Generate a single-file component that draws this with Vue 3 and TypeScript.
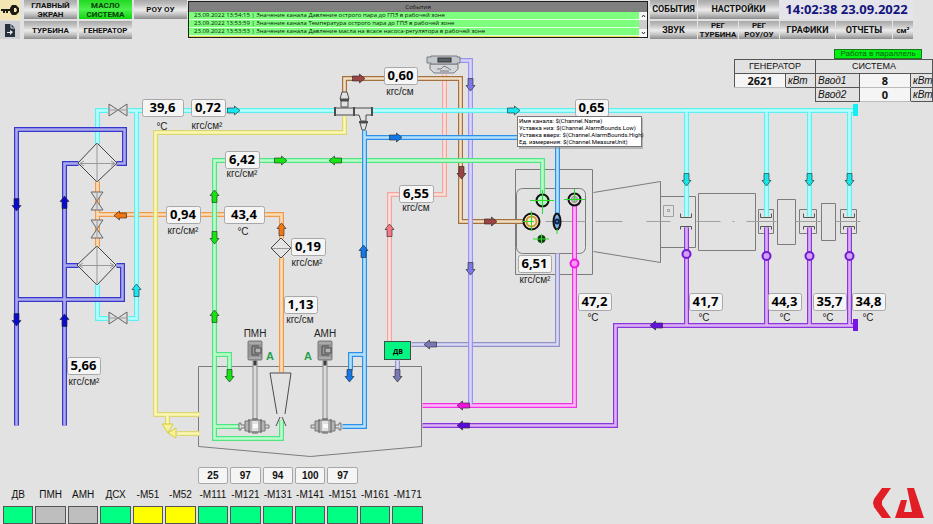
<script setup lang="ts">
import { ref } from 'vue'

type Dir = 'r' | 'd' | 'l' | 'u'

interface PipeGroup {
  id: string
  edge: string
  core: string
  d: string
}

interface Arrow {
  x: number
  y: number
  dir: Dir
  fill: string
}

interface Readout {
  x: number
  y: number
  w: number
  value: string
  unit?: string
  ux?: number
  uy?: number
}

interface Lamp {
  name: string
  state: 'on' | 'off' | 'warn'
  load?: number
}

const clock = ref('14:02:38 23.09.2022')

const events = [
  '23.09.2022 13:54:15 | Значение канала Давление острого пара до ГПЗ в рабочей зоне',
  '23.09.2022 13:53:59 | Значение канала Температура острого пара до ГПЗ в рабочей зоне',
  '23.09.2022 13:53:53 | Значение канала Давление масла на всасе насоса-регулятора в рабочей зоне',
]

const pipes: PipeGroup[] = [
  { id: 'drain', edge: '#9191c8', core: '#d9d9f4', d: 'M557 253V344H411M397 360V372' },
  { id: 'orange', edge: '#f09a46', core: '#fadcba', d: 'M97 181V246M97 214H281V238M281 257V372' },
  { id: 'pink', edge: '#f5a59c', core: '#fbe0dc', d: 'M444 74V194H389V341' },
  { id: 'brown', edge: '#a3703f', core: '#f3dfc6', d: 'M344 92V78H460V221H531' },
  { id: 'magenta', edge: '#f032e6', core: '#ffb9fa', d: 'M574 200V405H422' },
  { id: 'violet', edge: '#9a93f3', core: '#d8d5fb', d: 'M458 60H470V404' },
  { id: 'yellow', edge: '#dcd672', core: '#fbf8b4', d: 'M344 116V132H155V414H199M167 414V424M177 433H199' },
  {
    id: 'cyan',
    edge: '#5df0f0',
    core: '#b8ffff',
    d: 'M97 144V110H108M128 110H854M136 110V318H128M108 318H97V284M686 110V216M766 110V216M809 110V216M849 110V216',
  },
  {
    id: 'green',
    edge: '#4fe583',
    core: '#bdfccb',
    d: 'M542 200V160H214V438H281V420M214 426H240M214 354H229V370',
  },
  { id: 'blue', edge: '#2e8fe8', core: '#b4e2fb', d: 'M364 130V426H342M364 137H557V214M364 354H350V370' },
  { id: 'navy', edge: '#3737cd', core: '#aaaaeb', d: 'M16 425V129H124V163H116M64 425V163H78M64 265H78M116 265H122V299H16' },
  {
    id: 'purple',
    edge: '#8b36dc',
    core: '#dcb4f5',
    d: 'M854 325H615V425H422M686 227V325M766 227V325M809 227V325M849 227V325',
  },
]

const turn: Record<Dir, number> = { r: 0, d: 90, l: 180, u: 270 }

const arrows: Arrow[] = [
  { x: 233, y: 110, dir: 'r', fill: '#19e6f0' },
  { x: 513, y: 110, dir: 'r', fill: '#19e6f0' },
  { x: 686, y: 179, dir: 'd', fill: '#19e6e6' },
  { x: 766, y: 179, dir: 'd', fill: '#19e6e6' },
  { x: 809, y: 179, dir: 'd', fill: '#19e6e6' },
  { x: 849, y: 179, dir: 'd', fill: '#19e6e6' },
  { x: 136, y: 290, dir: 'u', fill: '#19e6f0' },
  { x: 16, y: 204, dir: 'd', fill: '#0a0ad0' },
  { x: 64, y: 202, dir: 'u', fill: '#0a0ad0' },
  { x: 16, y: 319, dir: 'd', fill: '#0a0ad0' },
  { x: 64, y: 320, dir: 'u', fill: '#0a0ad0' },
  { x: 120, y: 215, dir: 'l', fill: '#f07814' },
  { x: 281, y: 229, dir: 'u', fill: '#f07814' },
  { x: 214, y: 196, dir: 'u', fill: '#14e614' },
  { x: 214, y: 237, dir: 'd', fill: '#14e614' },
  { x: 214, y: 316, dir: 'u', fill: '#14e614' },
  { x: 229, y: 375, dir: 'd', fill: '#14e614' },
  { x: 280, y: 160, dir: 'r', fill: '#14e614' },
  { x: 335, y: 160, dir: 'l', fill: '#14e614' },
  { x: 395, y: 137, dir: 'r', fill: '#1478e6' },
  { x: 363, y: 251, dir: 'u', fill: '#1478e6' },
  { x: 349, y: 375, dir: 'd', fill: '#1478e6' },
  { x: 358, y: 78, dir: 'r', fill: '#9c4444' },
  { x: 461, y: 172, dir: 'd', fill: '#9c4444' },
  { x: 490, y: 221, dir: 'r', fill: '#9c4444' },
  { x: 389, y: 230, dir: 'u', fill: '#f57882' },
  { x: 470, y: 84, dir: 'd', fill: '#7d78e6' },
  { x: 470, y: 268, dir: 'd', fill: '#7d78e6' },
  { x: 463, y: 405, dir: 'l', fill: '#f014dc' },
  { x: 463, y: 425, dir: 'l', fill: '#5a0adc' },
  { x: 656, y: 325, dir: 'l', fill: '#6414dc' },
  { x: 430, y: 344, dir: 'l', fill: '#7878b4' },
  { x: 397, y: 375, dir: 'd', fill: '#7878b4' },
]

const P2 = 'кгс/см²'
const P1 = 'кгс/см'
const T = '°C'

const readouts: Readout[] = [
  { x: 142, y: 99, w: 41, value: '39,6', unit: T, ux: 162, uy: 130 },
  { x: 191, y: 99, w: 34, value: '0,72', unit: P2, ux: 207, uy: 129 },
  { x: 225, y: 151, w: 34, value: '6,42', unit: P2, ux: 242, uy: 177 },
  { x: 224, y: 206, w: 40, value: '43,4', unit: T, ux: 243, uy: 235 },
  { x: 166, y: 206, w: 34, value: '0,94', unit: P2, ux: 183, uy: 234 },
  { x: 291, y: 238, w: 34, value: '0,19', unit: P2, ux: 307, uy: 266 },
  { x: 284, y: 296, w: 33, value: '1,13', unit: P1, ux: 300, uy: 323 },
  { x: 67, y: 357, w: 33, value: '5,66', unit: P2, ux: 84, uy: 385 },
  { x: 384, y: 67, w: 33, value: '0,60', unit: P1, ux: 400, uy: 95 },
  { x: 399, y: 185, w: 34, value: '6,55', unit: P1, ux: 416, uy: 211 },
  { x: 575, y: 99, w: 33, value: '0,65' },
  { x: 518, y: 255, w: 33, value: '6,51', unit: P2, ux: 535, uy: 283 },
  { x: 578, y: 293, w: 33, value: '47,2', unit: T, ux: 593, uy: 321 },
  { x: 689, y: 293, w: 33, value: '41,7', unit: T, ux: 704, uy: 321 },
  { x: 768, y: 293, w: 33, value: '44,3', unit: T, ux: 785, uy: 321 },
  { x: 813, y: 293, w: 33, value: '35,7', unit: T, ux: 828, uy: 321 },
  { x: 852, y: 293, w: 33, value: '34,8', unit: T, ux: 868, uy: 321 },
]

const valves = [
  { x: 118, y: 110, a: 0 },
  { x: 118, y: 318, a: 0 },
  { x: 97, y: 201, a: 90 },
  { x: 97, y: 229, a: 90 },
]

const bearings = [686, 766, 809, 849]

const pumps = [
  { name: 'ПМН', x: 255, mode: 270, out: -1 },
  { name: 'АМН', x: 325, mode: 308, out: 1 },
]

const hint = [
  'Имя канала: $(Channel.Name)',
  'Уставка низ:  $(Channel.AlarmBounds.Low)',
  'Уставка вверх:  $(Channel.AlarmBounds.High)',
  'Ед. измерения:  $(Channel.MeasureUnit)',
]

const lamps: Lamp[] = [
  { name: 'ДВ', state: 'on' },
  { name: 'ПМН', state: 'off' },
  { name: 'АМН', state: 'off' },
  { name: 'ДСХ', state: 'on' },
  { name: '-М51', state: 'warn' },
  { name: '-М52', state: 'warn' },
  { name: '-М111', state: 'on', load: 25 },
  { name: '-М121', state: 'on', load: 97 },
  { name: '-М131', state: 'on', load: 94 },
  { name: '-М141', state: 'on', load: 100 },
  { name: '-М151', state: 'on', load: 97 },
  { name: '-М161', state: 'on' },
  { name: '-М171', state: 'on' },
]
</script>

<template>
  <div class="screen">
    <header class="bar">
      <div class="tools">
        <button class="tool key" type="button" aria-label="Доступ">
          <svg width="18" height="10" viewBox="0 0 18 10">
            <path d="M11 0H15L18 3V7L15 10H11L9 7V6H7V8H5V6H4V8H2V6H0V4H9V3ZM13 3V7H15L16 5L15 3Z" fill="#1c1a14" fill-rule="evenodd" />
          </svg>
        </button>
        <button class="tool" type="button" aria-label="Документ">
          <svg width="12" height="15" viewBox="0 0 12 15">
            <path d="M1 1H7L11 5V14H1Z" fill="#28303e" />
            <path d="M7 1V5H11" fill="none" stroke="#d8dce4" />
            <path d="M3 9H6V7L9 9L6 12V10H3Z" fill="#e8ecf2" />
          </svg>
        </button>
      </div>

      <nav class="nav">
        <button class="btn" type="button">ГЛАВНЫЙ<br />ЭКРАН</button>
        <button class="btn active" type="button">МАСЛО<br />СИСТЕМА</button>
        <button class="btn" type="button">РОУ ОУ</button>
        <button class="btn" type="button">ТУРБИНА</button>
        <button class="btn" type="button">ГЕНЕРАТОР</button>
      </nav>

      <section class="events">
        <h2>События</h2>
        <div class="log">
          <ul>
            <li v-for="e in events" :key="e">{{ e }}</li>
            <li class="warn"></li>
          </ul>
          <div class="scroll">
            <button type="button" aria-label="Вверх">
              <svg width="5" height="4" viewBox="0 0 5 4"><path d="M1 3L2.5 1L4 3" fill="none" stroke="#333" /></svg>
            </button>
            <span class="thumb"></span>
            <button type="button" aria-label="Вниз">
              <svg width="5" height="4" viewBox="0 0 5 4"><path d="M1 1L2.5 3L4 1" fill="none" stroke="#333" /></svg>
            </button>
          </div>
        </div>
      </section>

      <div class="controls">
        <button class="btn" type="button">СОБЫТИЯ</button>
        <button class="btn c-setup" type="button">НАСТРОЙКИ</button>
        <time class="clock">{{ clock }}</time>
        <button class="btn" type="button">ЗВУК</button>
        <button class="btn tight" type="button">РЕГ<br />ТУРБИНА</button>
        <button class="btn tight" type="button">РЕГ<br />РОУ/ОУ</button>
        <button class="btn" type="button">ГРАФИКИ</button>
        <button class="btn" type="button">ОТЧЕТЫ</button>
        <button class="btn tight" type="button">см²</button>
      </div>
    </header>

    <main class="stage">
      <svg class="scheme" viewBox="0 40 933 425">
        <g class="machine" transform="translate(.5 .5)">
          <path d="M198 366H421V446L310 456L198 446Z" />
          <path d="M515 169H592V274H515ZM593 192L660 181V262L593 251M660 196H695V247H660M698 193H755V250H698ZM777 199H795V244H777ZM821 203H835V240H821Z" />
          <rect x="516" y="188" width="69" height="65" rx="6" />
          <path d="M758 209H773V233H758ZM799 209H816V233H799ZM840 209H856V233H840Z" />
          <path class="thin" d="M663 205H673V216H663ZM667 209H669V211H667Z" />
          <path class="thin" d="M545 221H585M595 221H622M646 221H670M696 221H720M732 221H734M746 221H776M795 221H821M835 221H860" />
        </g>

        <g v-for="p in pipes" :key="p.id" class="pipe" transform="translate(.5 .5)">
          <path :d="p.d" :stroke="p.edge" stroke-width="5" />
          <path :d="p.d" :stroke="p.core" stroke-width="2.6" />
        </g>

        <rect x="853" y="104" width="5" height="12" fill="#0ff0f5" />
        <rect x="853" y="319" width="5" height="12" fill="#7814e6" />

        <g v-for="x in bearings" :key="x" class="bracket" transform="translate(.5 .5)">
          <path :d="`M${x - 6} 213V217H${x + 5}V213M${x - 6} 229V226H${x + 5}V229`" />
        </g>
        <circle v-for="x in bearings" :key="'p' + x" :cx="x + 0.5" :cy="x === 686 ? 254 : 256" r="4" fill="#d2a0f5" stroke="#7319d7" stroke-width="2" />
        <circle cx="574.5" cy="263.5" r="4" fill="#f59bf0" stroke="#f014e6" stroke-width="2" />

        <!-- heat exchangers and filter -->
        <g class="cooler">
          <path d="M97 143L117 163L97 182L78 163Z" />
          <path d="M97 246L116 265L97 285L77 265Z" />
          <path d="M281 238L291 248L281 258L271 248Z" />
          <path class="axis" d="M97 143V182M80 163.500H115M84 161L80 163.500L84 166M111 161L115 163.500L111 166" />
          <path class="axis" d="M97 246V285M79 265.500H114M83 263L79 265.500L83 268M110 263L114 265.500L110 268" />
          <path class="axis" d="M272 248.500H290" />
        </g>

        <g v-for="v in valves" :key="v.x + '-' + v.y" :transform="`translate(${v.x} ${v.y}) rotate(${v.a})`">
          <path d="M-9 -6L9 6V-6L-9 6Z" fill="#dedede" stroke="#666" />
          <path d="M-8 0H8" stroke="#999" />
        </g>

        <!-- relief valve of the yellow line -->
        <g fill="#f6f19a" stroke="#d6cf3c">
          <path d="M162 424H173L168 433Z" />
          <path d="M168 433L176 428V438Z" />
        </g>

        <!-- ejector -->
        <g fill="#e2e2e2" stroke="#4c4c4c">
          <path d="M342 92H347L349 99H340ZM341 101H348V107H341Z" />
          <path d="M335 108H354V115H335ZM354 108H372V115H366V121H361L359 115H354Z" />
          <path d="M360 123H367L365 130H362Z" />
          <path d="M335 107V116M354 107V116M372 107V116M359 122H368M340 100H349" stroke-width="2" />
        </g>

        <!-- flow meter -->
        <g stroke="#777b82">
          <path d="M430 64H458V69L454 73H434L430 69Z" fill="#d4d6da" />
          <path d="M427 57H431V56H457V57H460V63H457V64H431V63H427Z" fill="#c3c6cb" />
          <path d="M437 69H441L444 66L448 68L451 70M440 71H449" fill="none" />
          <rect x="438" y="58" width="13" height="4" fill="#56616a" stroke="#333" />
        </g>

        <!-- funnel and nozzle -->
        <path d="M277 414L270 373H291L285 414M276 426L280 417M286 426L282 417" fill="none" stroke="#4c4c4c" />

        <g v-for="p in pumps" :key="p.name" :transform="`translate(${p.x} 0)`">
          <rect x="-2" y="361" width="4" height="58" fill="#dcdcdc" stroke="#8a8a8a" />
          <rect x="-1" y="361" width="2" height="4" fill="#333" stroke="#444" />
          <rect x="-7" y="341" width="14" height="19" rx="1" fill="#969696" stroke="#7d7d7d" />
          <path d="M-6 343H6M-6 358H6" stroke="#bebebe" />
          <path d="M4 346H-3V355H4" fill="none" stroke="#4b4b4b" />
          <rect x="0" y="348" width="6" height="5" fill="#b4b4b4" stroke="#4b4b4b" />
          <g stroke="#777">
            <path :d="p.out < 0 ? 'M-16 423H-14V425H-10V428H-14V430H-16ZM10 425H14V428H10' : 'M16 423H14V425H10V428H14V430H16ZM-10 425H-14V428H-10'" fill="#ddd" />
            <path d="M-10 421H-6V420H6V421H10V431H6V432H-6V431H-10Z" fill="#b4b4b4" />
            <path d="M-6 419V433M6 419V433M-3 419H3M-3 433H3" stroke="#5f5f5f" />
            <path d="M-3 421H3V431H-3Z" fill="#e1e1e1" stroke="none" />
            <path d="M-2 424H3V428H-2Z" fill="#fafafa" stroke="none" />
          </g>
          <text class="tag" x="0" y="337">{{ p.name }}</text>
          <text class="mode" :x="p.mode - p.x" y="360">A</text>
        </g>

        <!-- ports on the bearing housing -->
        <g fill="none">
          <circle cx="542.500" cy="200.500" r="6" fill="#b4f5c3" stroke="#111" stroke-width="2" />
          <circle cx="574.500" cy="199.500" r="6" fill="#dcdcdc" stroke="#111" stroke-width="2" />
          <circle cx="574.500" cy="199.500" r="3" fill="#c8b4c8" stroke="#888" />
          <circle cx="531.500" cy="221.500" r="8" fill="#f5ebd2" stroke="#111" stroke-width="2" />
          <circle cx="531.500" cy="221.500" r="5" stroke="#d29632" stroke-width="2" />
          <ellipse cx="557" cy="221.500" rx="3.500" ry="8" fill="#78b4e6" stroke="#111" stroke-width="2" />
          <circle cx="557" cy="221.500" r="2" fill="#5082c8" stroke="#0f2850" stroke-width="2" />
          <circle cx="541.500" cy="239" r="4" fill="#143c14" />
          <path
            d="M530 200.500H554M542.500 190V214M564 199.500H585M574.500 189V202M531.500 211V231M523 221.500H534M533 239H549M541.500 234V244M557 229V234"
            stroke="#28dc28"
          />
        </g>

        <g v-for="(a, i) in arrows" :key="i" :transform="`translate(${a.x + 0.5} ${a.y + 0.5}) rotate(${turn[a.dir]})`">
          <path d="M-6 -2.500H1V-4.500L6.500 0L1 4.500V2.500H-6Z" :fill="a.fill" stroke="#222" stroke-opacity=".6" />
        </g>

        <rect x="384.500" y="341.500" width="26" height="18" fill="#05f582" stroke="#3c5046" />
        <text class="drive" x="398" y="354">ДВ</text>

        <g v-for="r in readouts" :key="r.value">
          <rect class="box" :x="r.x + 0.5" :y="r.y + 0.5" :width="r.w" height="17" rx="2" />
          <text class="value" :x="r.x + r.w / 2" :y="r.y + 13">{{ r.value }}</text>
          <text v-if="r.unit" class="unit" :x="r.ux" :y="r.uy">{{ r.unit }}</text>
        </g>

        <g class="hint">
          <rect x="519" y="118" width="124" height="31" fill="#888" opacity=".5" />
          <rect x="517.500" y="116.500" width="124" height="30" fill="#fff" stroke="#777" />
          <text v-for="(h, i) in hint" :key="h" x="519" :y="123 + i * 7">{{ h }}</text>
        </g>
      </svg>

      <aside class="power">
        <p class="sync">Работа в параллель</p>
        <table>
          <colgroup>
            <col class="w-num" /><col class="w-unit" /><col class="w-in" /><col class="w-num" /><col class="w-last" />
          </colgroup>
          <tbody>
            <tr>
              <th colspan="2">ГЕНЕРАТОР</th>
              <th colspan="3">СИСТЕМА</th>
            </tr>
            <tr>
              <td class="num">2621</td>
              <td class="it">кВт</td>
              <td class="it">Ввод1</td>
              <td class="num">8</td>
              <td class="it">кВт</td>
            </tr>
            <tr>
              <td class="none" colspan="2"></td>
              <td class="it">Ввод2</td>
              <td class="num">0</td>
              <td class="it">кВт</td>
            </tr>
          </tbody>
        </table>
      </aside>
    </main>

    <footer class="foot">
      <ul class="lamps">
        <li v-for="l in lamps" :key="l.name">
          <output class="load" :class="{ blank: l.load === undefined }">{{ l.load }}</output>
          <span class="name">{{ l.name }}</span>
          <span class="lamp" :class="l.state"></span>
        </li>
      </ul>
      <svg class="logo" width="51" height="30" viewBox="0 0 51 30" role="img" aria-label="КА">
        <path d="M9 0H18L9 13V17L18 30H9L1 19L0 15L1 11Z" fill="#e11e26" />
        <path d="M34 0H41L51 30H22L28 12H34L31 24H39Z" fill="#e11e26" />
      </svg>
    </footer>
  </div>
</template>

<style>
body {
  background: #e2e2e2;
}
</style>

<style scoped>
.screen {
  display: flex;
  flex-direction: column;
  min-height: 100vh;
  background: #e2e2e2;
  color: #111;
  font-family: 'Open Sans', 'Noto Sans', sans-serif;
}

button {
  margin: 0;
  padding: 0;
  border: 0;
  font: inherit;
  color: inherit;
}

.bar {
  display: grid;
  grid-template-columns: 20px 163px minmax(0, 1fr) 263px;
  height: 40px;
  padding-right: 20px;
  box-sizing: border-box;
}

.tools {
  display: grid;
  grid-template-rows: 20px 18px;
  gap: 1px;
}

.tool {
  display: flex;
  align-items: center;
  justify-content: center;
  background: #cfd0d3;
}

.tool.key {
  background: #f3e6b4;
}

.nav {
  display: grid;
  grid-template-columns: repeat(3, 1fr);
  grid-template-rows: 19px 18px;
  gap: 2px;
  margin-left: 4px;
  margin-right: -4px;
}

.btn {
  background: linear-gradient(#a9a9a9, #bcbcbc 20%, #ececec 52%, #c4c4c4 75%, #8c8c8c);
  font-family: Roboto, 'Open Sans', sans-serif;
  font-size: 9px;
  font-weight: 700;
  line-height: 9px;
  text-align: center;
  white-space: nowrap;
}

.nav .btn,
.btn.tight {
  font-size: 8px;
}

.btn.active {
  background: linear-gradient(#22d822, #4cf04c 50%, #0fd60f);
  color: #064006;
}

.events {
  display: flex;
  flex-direction: column;
  height: 37px;
  margin: 1px 2px 0 5px;
  box-sizing: border-box;
  border: 1px solid #1e1e1e;
  overflow: hidden;
  font-size: 6px;
}

.events h2 {
  margin: 0;
  background: #808080;
  font-size: 6px;
  font-weight: 400;
  line-height: 10px;
  text-align: center;
}

.log {
  display: flex;
  flex: 1;
  min-height: 0;
}

.log ul {
  flex: 1;
  margin: 0;
  padding: 0;
  list-style: none;
  background: #dfffdf;
}

.log li {
  height: 7px;
  margin-bottom: 1px;
  padding-left: 5px;
  background: #7dff7d;
  line-height: 7px;
  white-space: nowrap;
}

.log li.warn {
  background: #dede46;
}

.scroll {
  display: flex;
  flex-direction: column;
  width: 8px;
  background: #f4f4f4;
}

.scroll button {
  display: flex;
  align-items: center;
  justify-content: center;
  height: 8px;
  background: #f8f8f8;
}

.thumb {
  flex: 1;
  background: #cdcdcd;
}

.controls {
  display: grid;
  grid-template-columns: 47px 40px 40px 55px 56px 20px;
  grid-template-rows: 19px 18px;
  gap: 2px 1px;
}

.c-setup {
  grid-column: span 2;
}

.clock {
  grid-column: span 3;
  color: #14147d;
  background: #e4e4ea;
  font-size: 13px;
  font-weight: 700;
  line-height: 19px;
  text-align: center;
  white-space: nowrap;
}

.stage {
  position: relative;
}

.scheme {
  display: block;
  width: 100%;
}

.machine path,
.machine rect {
  fill: none;
  stroke: #7c7c7c;
}

.machine .thin {
  stroke: #a0a0a0;
}

.pipe path {
  fill: none;
}

.bracket path {
  fill: none;
  stroke: #555;
}

.cooler path {
  fill: #e4e4e4;
  stroke: #444;
}

.cooler .axis {
  fill: none;
  stroke: #999;
}

.box {
  fill: #f5f5f5;
  stroke: #a8a8a8;
}

.value {
  font-size: 13px;
  font-weight: 700;
  text-anchor: middle;
}

.unit,
.tag {
  fill: #222;
  font-family: 'Liberation Sans', sans-serif;
  font-size: 10px;
  text-anchor: middle;
}

.mode {
  fill: #28a050;
  font-family: 'Liberation Sans', sans-serif;
  font-size: 11px;
  font-weight: 700;
  text-anchor: middle;
}

.drive {
  font-size: 7px;
  font-weight: 700;
  text-anchor: middle;
}

.hint text {
  font-family: Roboto, 'Open Sans', sans-serif;
  font-size: 6px;
}

.power {
  position: absolute;
  top: 9px;
  right: 0;
  font-family: 'Liberation Sans', sans-serif;
}

.sync {
  width: 88px;
  margin: 0 11px 0 auto;
  background: #00f014;
  color: #0a5a14;
  box-sizing: border-box;
  border: 1px solid #1e781e;
  font-size: 8px;
  line-height: 8px;
  text-align: center;
}

.power table {
  table-layout: fixed;
  width: 198px;
  border-collapse: collapse;
  font-size: 10px;
  line-height: 13px;
}

.power th,
.power td {
  height: 13px;
  padding: 0;
  border: 1px solid #555;
  font-weight: 400;
  text-align: center;
}

.power th {
  font-size: 9px;
}

.power .num {
  background: #f5f5f5;
  border-color: #bbb #555;
  font-family: 'Open Sans', 'Noto Sans', sans-serif;
  font-size: 11px;
  font-weight: 700;
}

.power .it {
  padding-left: 2px;
  font-style: italic;
  text-align: left;
}

.power .none {
  border: 0;
}

.w-num {
  width: 51px;
}

.w-unit {
  width: 30px;
}

.w-in {
  width: 44px;
}

.w-last {
  width: 22px;
}

.foot {
  display: flex;
  flex: 1;
  justify-content: space-between;
  padding-top: 2px;
}

.lamps {
  display: grid;
  grid-template-columns: repeat(13, 1fr);
  gap: 2px;
  width: 45%;
  margin: 0 0 0 3px;
  padding: 0;
  list-style: none;
  font-family: 'Liberation Sans', sans-serif;
}

.lamps li {
  display: flex;
  flex-direction: column;
  min-width: 0;
}

.load {
  height: 17px;
  box-sizing: border-box;
  border: 1px solid #a8a8a8;
  border-radius: 2px;
  background: #f5f5f5;
  font-size: 10px;
  font-weight: 700;
  line-height: 15px;
  text-align: center;
}

.load.blank {
  visibility: hidden;
}

.name {
  font-size: 10px;
  line-height: 22px;
  text-align: center;
  white-space: nowrap;
}

.lamp {
  flex: 1;
  min-height: 18px;
  box-sizing: border-box;
  border: 1px solid #555;
}

.lamp.on {
  background: #00ff82;
}

.lamp.off {
  background: #bebebe;
}

.lamp.warn {
  background: #ffff00;
}

.logo {
  align-self: flex-end;
  margin: 0 9px 6px 0;
}
</style>
